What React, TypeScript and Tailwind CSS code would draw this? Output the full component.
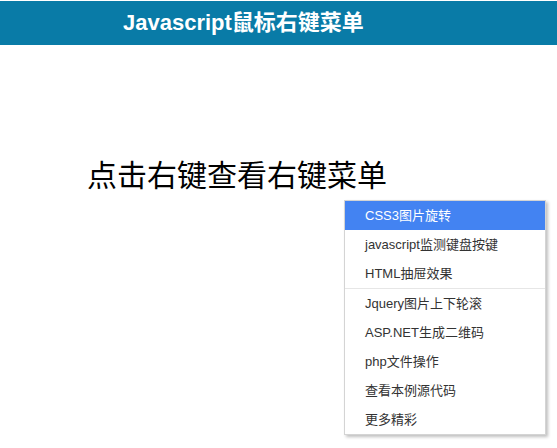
const items = [
  { id: "css3", label: "CSS3图片旋转", active: true },
  { id: "keyboard", label: "javascript监测键盘按键" },
  { id: "drawer", label: "HTML抽屉效果", divider: true },
  { id: "jquery", label: "Jquery图片上下轮滚" },
  { id: "qrcode", label: "ASP.NET生成二维码" },
  { id: "php", label: "php文件操作" },
  { id: "source", label: "查看本例源代码" },
  { id: "more", label: "更多精彩" },
];

const App = () => {
  return (
    <div
      className="relative w-[557px] h-[448px] bg-white overflow-hidden"
      style={{ fontFamily: '"Liberation Sans", "Noto Sans CJK SC", sans-serif' }}
    >
      <div className="mt-px h-[44px] bg-[#097ba7] flex items-center pl-[123px]">
        <h1 className="text-[22px] font-bold text-white leading-none">
          Javascript鼠标右键菜单
        </h1>
      </div>

      <p className="mt-[116px] pl-[87px] text-[30px] leading-[30px] text-black">
        点击右键查看右键菜单
      </p>

      <ul className="absolute left-[344px] top-[200px] w-[202px] bg-white border border-[#d4d4d4] shadow-[2px_2px_3px_rgba(0,0,0,0.25)]">
        {items.map((item) => (
          <li
            key={item.id}
            className={`h-[29px] flex items-center pl-[20px] text-[13px] ${
              item.active ? "bg-[#4383f2] text-white" : "text-[#333]"
            } ${item.divider ? "border-b border-[#e6e6e6] h-[30px]" : ""}`}
          >
            {item.label}
          </li>
        ))}
      </ul>
    </div>
  );
};

export default App;
